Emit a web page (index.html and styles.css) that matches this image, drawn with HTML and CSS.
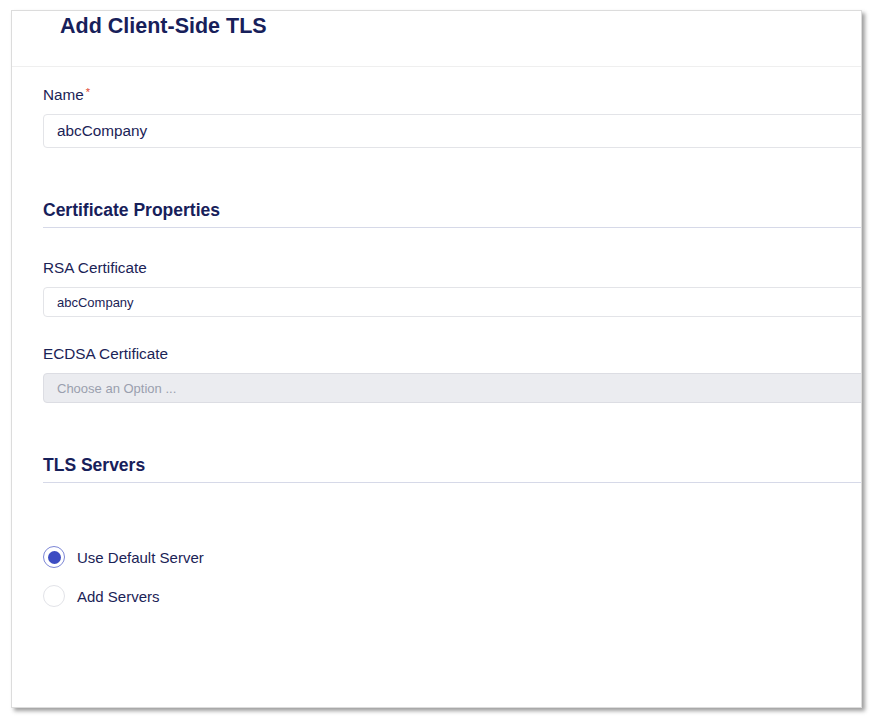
FILE: index.html
```html
<!DOCTYPE html>
<html>
<head>
<meta charset="utf-8">
<link rel="stylesheet" href="styles.css">
</head>
<body>
<div class="card">
  <div class="header">
    <h1 class="title">Add Client-Side TLS</h1>
  </div>
  <div class="body">
    <label class="label label-first">Name<span class="req">*</span></label>
    <div class="input input-lg">abcCompany</div>

    <h2 class="section">Certificate Properties</h2>

    <label class="label label-rsa">RSA Certificate</label>
    <div class="input input-sm">abcCompany</div>

    <label class="label label-ecdsa">ECDSA Certificate</label>
    <div class="input input-sm disabled">Choose an Option ...</div>

    <h2 class="section">TLS Servers</h2>

    <div class="radios">
      <div class="radio-row">
        <span class="radio checked"><span class="dot"></span></span>
        <span class="radio-label">Use Default Server</span>
      </div>
      <div class="radio-row">
        <span class="radio"></span>
        <span class="radio-label">Add Servers</span>
      </div>
    </div>
  </div>
</div>
</body>
</html>
```

FILE: styles.css
```css
* { box-sizing: border-box; }
html, body { margin: 0; padding: 0; background: #ffffff; }
body {
  font-family: "Liberation Sans", Arial, sans-serif;
  color: #1b2356;
  width: 874px;
  height: 726px;
  overflow: hidden;
}
.card {
  margin: 10px 0 0 11px;
  width: 851px;
  height: 698px;
  border: 1px solid #dcdcdc;
  background: #fff;
  box-shadow: 3px 3px 4px rgba(0, 0, 0, 0.38);
  overflow: hidden;
}
.header {
  height: 56px;
  border-bottom: 1px solid #efefef;
}
.title {
  margin: 0;
  padding-left: 48px;
  line-height: 30px;
  font-size: 21.5px;
  font-weight: bold;
  color: #17205a;
}
.body {
  padding-left: 31px;
}
.label {
  display: block;
  font-size: 15.3px;
  line-height: 18px;
  color: #1b2356;
}
.label-first { margin-top: 19px; }
.label-rsa { margin-top: 31px; }
.label-ecdsa { margin-top: 28px; }
.req {
  color: #e0452e;
  font-size: 11px;
  vertical-align: top;
  margin-left: 2px;
  position: relative;
  top: -3px;
}
.input {
  margin-top: 10px;
  width: 860px;
  border: 1px solid #e3e4e8;
  border-radius: 4px;
  padding-left: 13px;
  display: flex;
  align-items: center;
  color: #1b2356;
}
.input-lg { height: 34px; font-size: 15.3px; }
.input-sm { height: 30px; font-size: 13px; }
.disabled {
  background: #ebecf0;
  border-color: #dcdde3;
  color: #9a9fae;
}
.section {
  margin: 52px 0 0 0;
  padding-bottom: 7px;
  font-size: 17.5px;
  line-height: 20px;
  font-weight: bold;
  color: #17205a;
  border-bottom: 1px solid #d6d9e8;
}
.radios {
  margin-top: 63px;
  display: flex;
  flex-direction: column;
  gap: 17px;
}
.radio-row {
  display: flex;
  align-items: center;
  height: 22px;
}
.radio {
  width: 22px;
  height: 22px;
  border-radius: 50%;
  border: 1px solid #e2e3e8;
  display: flex;
  align-items: center;
  justify-content: center;
  flex: none;
}
.radio.checked {
  border-color: #7c86d6;
}
.dot {
  width: 13px;
  height: 13px;
  border-radius: 50%;
  background: #3c4cc2;
}
.radio-label {
  margin-left: 12px;
  font-size: 15px;
  color: #1b2356;
}
```
